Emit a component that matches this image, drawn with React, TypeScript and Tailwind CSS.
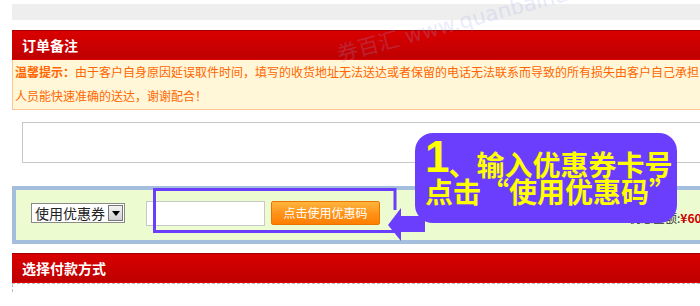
import React from "react";

function RedHeader({ title }: { title: string }) {
  return (
    <div className="h-[30px] flex items-center pl-[10px] bg-gradient-to-b from-[#d90000] to-[#be0000] border-t border-t-[#a00000] border-b border-b-[#e20000]">
      <span className="text-[14px] font-bold text-white leading-none">{title}</span>
    </div>
  );
}

export default function App() {
  return (
    <div className="relative w-[700px] h-[306px] overflow-hidden bg-white font-['Noto_Sans_CJK_SC',sans-serif]">
      <div className="pt-[4px] pl-[12px] w-[730px]">
        <div className="h-[16px] bg-[#eeeeee]" />

        <div className="mt-[10px]">
          <RedHeader title="订单备注" />
        </div>

        <div className="h-[50px] bg-[#fff7d8] border border-[#ffc493] border-t-0 pl-[2px] text-[12px] leading-[24px] text-[#ff6600] whitespace-nowrap overflow-hidden">
          <div>
            <span className="font-bold">温馨提示：</span>
            由于客户自身原因延误取件时间，填写的收货地址无法送达或者保留的电话无法联系而导致的所有损失由客户自己承担，为了让配送
          </div>
          <div>人员能快速准确的送达，谢谢配合！</div>
        </div>

        <div className="mt-[12px] ml-[10px] h-[41px] border border-[#c8c8c8] bg-white" />

        <div className="mt-[23px] h-[58px] border-4 border-[#a3bfdd] bg-[#edfcd0] flex items-start pl-[15px] pt-[11px]">
          <div className="mt-[2px] w-[94px] h-[20px] border border-[#8a8a8a] bg-white flex items-center justify-between pl-[3px] pr-[1px]">
            <span className="text-[14px] leading-none text-[#222]">使用优惠券</span>
            <span className="w-[15px] h-[16px] border border-[#777] bg-gradient-to-b from-[#f4f4f4] to-[#cfcfcf] flex items-center justify-center">
              <span className="w-0 h-0 border-l-[4px] border-r-[4px] border-t-[5px] border-l-transparent border-r-transparent border-t-black" />
            </span>
          </div>
          <div className="ml-[21px] w-[119px] h-[25px] border border-[#c8c8c8] bg-white" />
          <button className="ml-[6px] w-[109px] h-[24px] border border-[#e97400] rounded-[2px] bg-gradient-to-b from-[#ffb43c] via-[#ff9418] to-[#ff7e00] text-white text-[12px] leading-none">
            点击使用优惠码
          </button>
          <div className="ml-[249px] mt-[11px] text-[12px] leading-none whitespace-nowrap">
            <span className="text-[#333]">优惠金额:</span>
            <span className="text-[#cc0000] font-bold">¥60.00</span>
          </div>
        </div>

        <div className="mt-[9px]">
          <RedHeader title="选择付款方式" />
        </div>
        <div className="border-t border-dashed border-[#bbbbbb]" />
        <div className="h-[8px] border-l border-dashed border-[#bbbbbb]" />
      </div>

      {/* watermark */}
      <div className="absolute left-[338px] top-[40px] -rotate-[15deg] origin-left text-[21px] text-[#9aa4e6] opacity-20 whitespace-nowrap pointer-events-none font-['DejaVu_Sans','Noto_Sans_CJK_SC',sans-serif]">
        券百汇 www.quanbaihui.com
      </div>

      {/* highlight frame + arrow */}
      <svg className="absolute left-0 top-0 pointer-events-none" width="700" height="306" viewBox="0 0 700 306">
        <path d="M395 210 L395 189.5 L154.5 189.5 L154.5 231.5 L396 231.5" fill="none" stroke="#6b3dfc" strokeWidth="3" />
        <polygon points="388,225 401,208 401,216 425,216 425,232 401,232 401,241" fill="#6b3dfc" />
      </svg>

      {/* callout bubble */}
      <div className="absolute left-[415px] top-[133px] w-[262px] h-[90px] rounded-[18px] bg-[#6b3dfc] pointer-events-none">
        <div className="absolute left-[10px] top-[8px] text-[#ffff00] font-bold whitespace-nowrap font-['Noto_Sans_CJK_SC',sans-serif]">
          <div className="flex items-end h-[38px]">
            <span className="text-[44px] leading-none font-['Liberation_Sans',sans-serif] tracking-[-1px]">1</span>
            <span className="text-[28px] leading-[30px]">、输入优惠券卡号</span>
          </div>
          <div className="flex text-[28px] leading-[28px] -mt-[2px]">
            <span>点击</span>
            <span className="inline-block w-[28px] text-right">“</span>
            <span>使用优惠码</span>
            <span className="inline-block w-[20px] text-left">”</span>
          </div>
        </div>
      </div>
    </div>
  );
}
